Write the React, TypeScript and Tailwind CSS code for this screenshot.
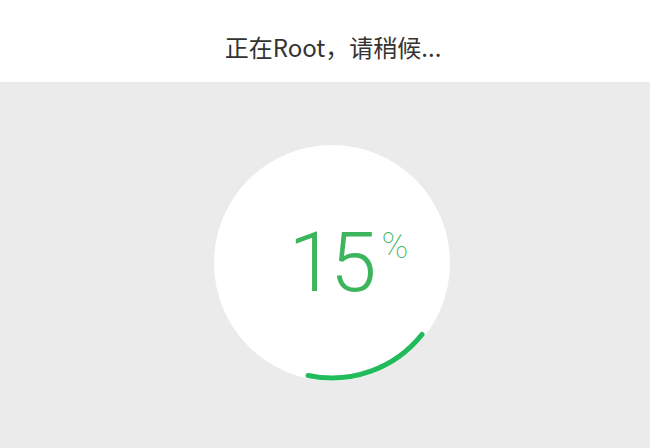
import React from "react";

export default function App() {
  return (
    <div className="w-[650px] h-[448px] flex flex-col bg-[#ebebeb] overflow-hidden">
      <div className="h-[82px] bg-white flex items-center justify-center">
        <span
          className="text-[24px] text-[#333333] pt-[11px] pl-[16px]"
          style={{ fontFamily: '"Noto Sans CJK SC", sans-serif' }}
        >
          正在Root，请稍候...
        </span>
      </div>
      <div className="flex-1 flex justify-center pt-[63px] pl-[14px]">
        <div className="relative w-[236px] h-[236px] rounded-full bg-white flex items-center justify-center">
          <svg className="absolute inset-0" width="236" height="236" viewBox="0 0 236 236">
            <path
              d="M 208.1 189.4 A 115 115 0 0 1 94.1 230.5"
              fill="none"
              stroke="#22bb5b"
              strokeWidth="5"
              strokeLinecap="round"
            />
          </svg>
          <div
            className="relative text-[#3cb55c] font-light leading-none text-[84px] tracking-[-5px] pr-[4px]"
            style={{ fontFamily: 'Roboto, sans-serif' }}
          >
            15
            <span className="absolute left-full top-[7px] ml-[6px] text-[36px] font-thin tracking-normal">%</span>
          </div>
        </div>
      </div>
    </div>
  );
}
